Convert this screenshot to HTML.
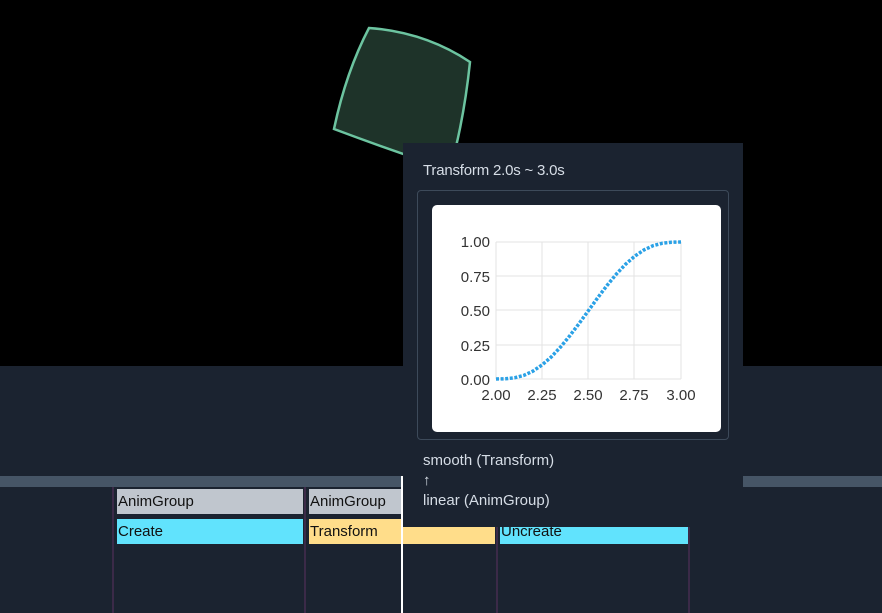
<html><head><style>
body{margin:0;width:882px;height:613px;overflow:hidden;background:#000;font-family:"Liberation Sans",sans-serif;position:relative}
.a{position:absolute}
.cell{position:absolute;font-size:15px;color:#111;line-height:25px;padding-left:1px;box-sizing:border-box;overflow:hidden;white-space:nowrap}
</style></head><body>
<div class="a" style="left:0;top:366px;width:882px;height:247px;background:#1b2330"></div>
<div class="a" style="left:0;top:476px;width:882px;height:11px;background:#465566"></div>
<div class="a" style="left:112px;top:487px;width:2px;height:126px;background:#3b2a48"></div>
<div class="a" style="left:304px;top:487px;width:2px;height:126px;background:#3b2a48"></div>
<div class="a" style="left:496px;top:487px;width:2px;height:126px;background:#3b2a48"></div>
<div class="a" style="left:688px;top:487px;width:2px;height:126px;background:#3b2a48"></div>
<div class="cell" style="left:117px;top:489px;width:186px;height:25px;background:#c0c6ce">AnimGroup</div>
<div class="cell" style="left:309px;top:489px;width:186px;height:25px;background:#c0c6ce">AnimGroup</div>
<div class="cell" style="left:117px;top:519px;width:186px;height:25px;background:#61e3fd">Create</div>
<div class="cell" style="left:309px;top:519px;width:186px;height:25px;background:#ffdd8a">Transform</div>
<div class="cell" style="left:500px;top:519px;width:188px;height:25px;background:#61e3fd">Uncreate</div>
<div class="a" style="left:401px;top:476px;width:2px;height:137px;background:#fff"></div>
<svg class="a" style="left:0;top:0" width="882" height="366"><path d="M369,28 Q425,32 470,62 Q464,120 450,170 Q390,150 334,129 Q346,72 369,28Z" fill="#1e3329" stroke="#6cc4a0" stroke-width="2.5"/></svg>
<div class="a" style="left:403px;top:143px;width:340px;height:384px;background:#1b2330"></div>
<div class="a" style="left:423px;top:162px;color:#d6dde6;font-size:15px;letter-spacing:-0.2px">Transform 2.0s ~ 3.0s</div>
<div class="a" style="left:417px;top:190px;width:310px;height:248px;border:1px solid #3d4a5a;border-radius:4px"></div>
<div class="a" style="left:432px;top:205px;width:289px;height:227px;background:#fff;border-radius:5px"></div>
<svg class="a" style="left:432px;top:205px" width="289" height="227" font-family="Liberation Sans" font-size="15" fill="#333">
<g stroke="#e3e3e3" stroke-width="1">
<line x1="64" y1="37" x2="249" y2="37"/><line x1="64" y1="71" x2="249" y2="71"/><line x1="64" y1="105" x2="249" y2="105"/><line x1="64" y1="140" x2="249" y2="140"/><line x1="64" y1="174" x2="249" y2="174"/>
<line x1="64" y1="37" x2="64" y2="174"/><line x1="110" y1="37" x2="110" y2="174"/><line x1="156" y1="37" x2="156" y2="174"/><line x1="202" y1="37" x2="202" y2="174"/><line x1="249" y1="37" x2="249" y2="174"/>
</g>
<g text-anchor="end"><text x="58" y="42">1.00</text><text x="58" y="77">0.75</text><text x="58" y="111">0.50</text><text x="58" y="146">0.25</text><text x="58" y="180">0.00</text></g>
<g text-anchor="middle"><text x="64" y="195">2.00</text><text x="110" y="195">2.25</text><text x="156" y="195">2.50</text><text x="202" y="195">2.75</text><text x="249" y="195">3.00</text></g>
<polyline points="64,174 73.25,173.8 82.5,172.8 91.75,170.4 101,166.1 110.25,159.8 119.5,151.7 128.75,141.8 138,130.5 147.25,118.3 156.5,105.5 165.75,92.7 175,80.5 184.25,69.2 193.5,59.3 202.75,51.2 212,44.9 221.25,40.6 230.5,38.2 239.75,37.2 249,37" fill="none" stroke="#2aa1e6" stroke-width="3.5" stroke-dasharray="3 1.6"/>
</svg>
<div class="a" style="left:423px;top:451px;color:#d6dde6;font-size:15px;line-height:20px">smooth (Transform)<br>↑<br>linear (AnimGroup)</div>
</body></html>
